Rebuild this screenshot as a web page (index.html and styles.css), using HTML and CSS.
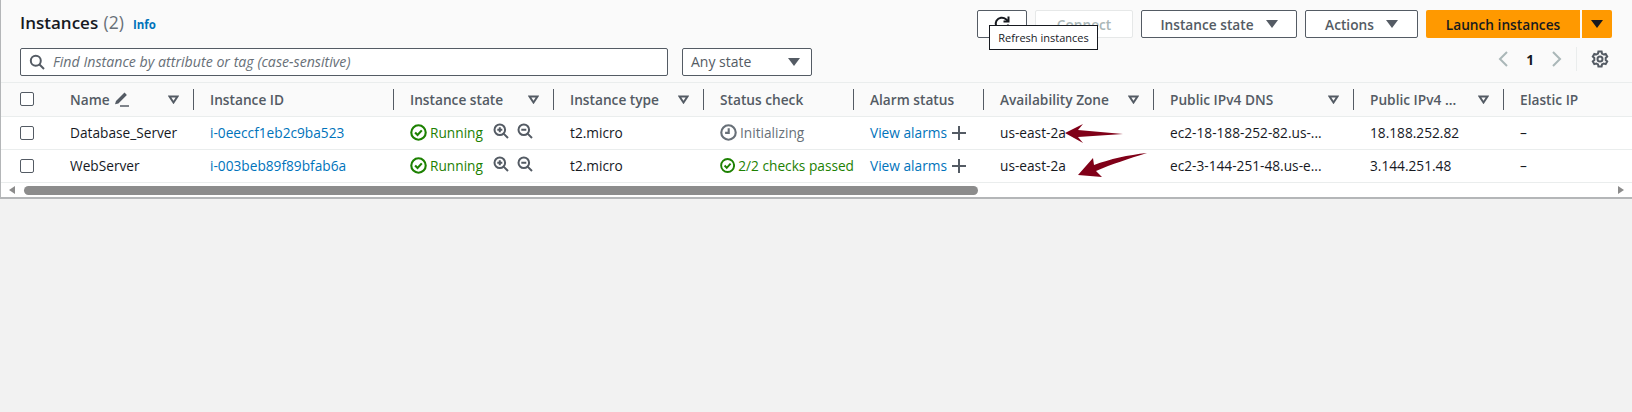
FILE: index.html
```html
<!DOCTYPE html>
<html lang="en">
<head>
    <meta charset="UTF-8">
    <title>Instances</title>
    <link rel="stylesheet" href="styles.css">
</head>
<body>
    <section class="panel">
        <div class="top">
            <div class="title-row">
                <h1>Instances <span class="count">(2)</span></h1>
                <a class="info">Info</a>
                <div class="actions">
                    <div class="refresh-wrap">
                        <button class="btn btn-refresh">
                            <svg width="20" height="20" viewBox="0 0 20 20" fill="none" stroke="#16191f" stroke-width="2"><path d="M16 10.5a6.2 6.2 0 1 1-2-5.2l2 1.7"/><path d="M16.5 2.5v5h-5"/></svg>
                        </button>
                        <div class="tooltip">Refresh instances</div>
                    </div>
                    <button class="btn btn-connect">Connect</button>
                    <button class="btn btn-state">Instance state <i class="caret"></i></button>
                    <button class="btn btn-actions">Actions <i class="caret"></i></button>
                    <div class="launch">
                        <button class="btn-launch">Launch instances</button>
                        <button class="btn-launch-caret"><i class="caret caret-dark"></i></button>
                    </div>
                </div>
            </div>
            <div class="filter-row">
                <div class="search">
                    <svg width="16" height="16" viewBox="0 0 16 16" fill="none" stroke="#545b64" stroke-width="2"><circle cx="6.8" cy="6.8" r="5"/><path d="M10.5 10.500 15 15"/></svg>
                    <span class="search-text">Find Instance by attribute or tag (case-sensitive)</span>
                </div>
                <div class="select"><span class="select-text">Any state</span> <i class="caret"></i></div>
                <div class="pager">
                    <svg width="12" height="18" viewBox="0 0 12 18" fill="none" stroke="#aab7b8" stroke-width="2"><path d="M10 2 3 9l7 7"/></svg>
                    <span class="page-num">1</span>
                    <svg width="12" height="18" viewBox="0 0 12 18" fill="none" stroke="#aab7b8" stroke-width="2"><path d="m2 2 7 7-7 7"/></svg>
                    <span class="pager-line"></span>
                    <svg width="18" height="18" viewBox="0 0 18 18" fill="none" stroke="#545b64" stroke-width="2"><circle cx="9" cy="9" r="2.500"/><path d="M7.400 1.500h3.200l.4 2 1.700 1 2-.6 1.500 2.600-1.500 1.400v2.200l1.500 1.400-1.500 2.600-2-.6-1.700 1-.4 2H7.400l-.4-2-1.700-1-2 .6-1.500-2.600 1.500-1.400V7.900L1.800 6.500l1.500-2.600 2 .6 1.700-1z"/></svg>
                </div>
            </div>
        </div>

        <table class="grid">
            <colgroup>
                <col class="c-check"><col class="c-name"><col class="c-id"><col class="c-state"><col class="c-type"><col class="c-status"><col class="c-alarm"><col class="c-zone"><col class="c-dns"><col class="c-ip"><col class="c-elastic">
            </colgroup>
            <thead>
                <tr>
                    <th class="cell-check"><span class="checkbox"></span></th>
                    <th class="th-name"><div class="th-in">Name
                        <svg class="pencil" width="16" height="16" viewBox="0 0 16 16"><path d="M1 13.200 2 10 10.500 1.600l2.400 2.400L4.400 12.400z" fill="#545b64"/><path d="M6 15h9" stroke="#545b64" stroke-width="1.500"/></svg>
                        <svg class="sort" width="11" height="9" viewBox="0 0 11 9" fill="none" stroke="#545b64" stroke-width="2"><path d="M1.500 1.500h8l-4 6z"/></svg></div></th>
                    <th><div class="th-in">Instance ID</div></th>
                    <th><div class="th-in">Instance state <svg class="sort" width="11" height="9" viewBox="0 0 11 9" fill="none" stroke="#545b64" stroke-width="2"><path d="M1.500 1.500h8l-4 6z"/></svg></div></th>
                    <th><div class="th-in">Instance type <svg class="sort" width="11" height="9" viewBox="0 0 11 9" fill="none" stroke="#545b64" stroke-width="2"><path d="M1.500 1.500h8l-4 6z"/></svg></div></th>
                    <th><div class="th-in">Status check</div></th>
                    <th><div class="th-in">Alarm status</div></th>
                    <th><div class="th-in">Availability Zone <svg class="sort" width="11" height="9" viewBox="0 0 11 9" fill="none" stroke="#545b64" stroke-width="2"><path d="M1.500 1.500h8l-4 6z"/></svg></div></th>
                    <th><div class="th-in">Public IPv4 DNS <svg class="sort" width="11" height="9" viewBox="0 0 11 9" fill="none" stroke="#545b64" stroke-width="2"><path d="M1.500 1.500h8l-4 6z"/></svg></div></th>
                    <th><div class="th-in">Public IPv4 ... <svg class="sort" width="11" height="9" viewBox="0 0 11 9" fill="none" stroke="#545b64" stroke-width="2"><path d="M1.500 1.500h8l-4 6z"/></svg></div></th>
                    <th class="th-last"><div class="th-in">Elastic IP</div></th>
                </tr>
            </thead>
            <tbody>
                <tr>
                    <td class="cell-check"><span class="checkbox"></span></td>
                    <td class="td-name">Database_Server</td>
                    <td><a class="link">i-0eeccf1eb2c9ba523</a></td>
                    <td>
                        <div class="state">
                            <svg class="ok" width="17" height="17" viewBox="0 0 16 16" fill="none" stroke="#1d8102" stroke-width="2"><circle cx="8" cy="8" r="6.800"/><path d="m4.800 8 2.300 2.400 4-4.400"/></svg>
                            <span class="green">Running</span>
                            <svg class="zoom-in" width="16" height="16" viewBox="0 0 16 16" fill="none" stroke="#545b64" stroke-width="2"><circle cx="6.800" cy="6.800" r="5.300"/><path d="M10.600 10.600 15 15M4.300 6.800h5M6.800 4.300v5"/></svg>
                            <svg class="zoom-out" width="16" height="16" viewBox="0 0 16 16" fill="none" stroke="#545b64" stroke-width="2"><circle cx="6.800" cy="6.800" r="5.300"/><path d="M10.600 10.600 15 15M4.300 6.800h5"/></svg>
                        </div>
                    </td>
                    <td>t2.micro</td>
                    <td>
                        <div class="state">
                            <svg class="ok" width="17" height="17" viewBox="0 0 16 16" fill="none" stroke="#687078" stroke-width="2"><circle cx="8" cy="8" r="6.800"/><path d="M8.200 4v4.400H4.800"/></svg>
                            <span class="gray">Initializing</span>
                        </div>
                    </td>
                    <td class="td-alarm"><a class="link">View alarms</a>
                        <svg width="14" height="14" viewBox="0 0 14 14" stroke="#545b64" stroke-width="2"><path d="M0 7h14M7 0v14"/></svg></td>
                    <td>us-east-2a</td>
                    <td>ec2-18-188-252-82.us-...</td>
                    <td>18.188.252.82</td>
                    <td class="td-last">–</td>
                </tr>
                <tr>
                    <td class="cell-check"><span class="checkbox"></span></td>
                    <td class="td-name">WebServer</td>
                    <td><a class="link">i-003beb89f89bfab6a</a></td>
                    <td>
                        <div class="state">
                            <svg class="ok" width="17" height="17" viewBox="0 0 16 16" fill="none" stroke="#1d8102" stroke-width="2"><circle cx="8" cy="8" r="6.800"/><path d="m4.800 8 2.300 2.400 4-4.400"/></svg>
                            <span class="green">Running</span>
                            <svg class="zoom-in" width="16" height="16" viewBox="0 0 16 16" fill="none" stroke="#545b64" stroke-width="2"><circle cx="6.800" cy="6.800" r="5.300"/><path d="M10.600 10.600 15 15M4.300 6.800h5M6.800 4.300v5"/></svg>
                            <svg class="zoom-out" width="16" height="16" viewBox="0 0 16 16" fill="none" stroke="#545b64" stroke-width="2"><circle cx="6.800" cy="6.800" r="5.300"/><path d="M10.600 10.600 15 15M4.300 6.800h5"/></svg>
                        </div>
                    </td>
                    <td>t2.micro</td>
                    <td>
                        <div class="state">
                            <svg class="ok" width="17" height="17" viewBox="0 0 16 16" fill="none" stroke="#1d8102" stroke-width="2"><circle cx="8" cy="8" r="6.800"/><path d="m4.800 8 2.300 2.400 4-4.400"/></svg>
                            <span class="green">2/2 checks passed</span>
                        </div>
                    </td>
                    <td class="td-alarm"><a class="link">View alarms</a>
                        <svg width="14" height="14" viewBox="0 0 14 14" stroke="#545b64" stroke-width="2"><path d="M0 7h14M7 0v14"/></svg></td>
                    <td>us-east-2a</td>
                    <td>ec2-3-144-251-48.us-e...</td>
                    <td>3.144.251.48</td>
                    <td class="td-last">–</td>
                </tr>
            </tbody>
        </table>

        <div class="scrollbar">
            <i class="arrow-left"></i>
            <div class="track"><div class="thumb"></div></div>
            <i class="arrow-right"></i>
        </div>

        <!-- hand drawn arrows on top of the table -->
        <svg class="mark mark-one" width="59" height="20" viewBox="0 0 59 20"><path d="M0 9 18 0l-5 6 45 4-45 3 5 6z" fill="#800018"/></svg>
        <svg class="mark mark-two" width="70" height="25" viewBox="0 0 70 25"><path d="M0 22 15 5l1 7C32 6 50 2 69 0 50 6 34 11 18 18l6 6z" fill="#800018"/></svg>
    </section>
</body>
</html>
```

FILE: styles.css
```css
* {
    box-sizing: border-box;
}

body {
    margin: 0;
    height: 412px;
    overflow: hidden;
    background-color: #f2f2f2;
    font-family: "Open Sans", "Noto Sans", sans-serif;
    font-size: 13.700px;
    color: #16191f;
}

.panel {
    position: relative;
    height: 199px;
    background-color: #fff;
    border-left: 1px solid #b4b6b8;
    border-bottom: 2px solid #b4b6b8;
}

.top {
    height: 83px;
    padding: 10px 20px 0 19px;
    background-color: #fafafa;
    border-bottom: 1px solid #eaeded;
}

.title-row {
    display: flex;
    align-items: flex-start;
    height: 38px;
}

h1 {
    margin: 0;
    font-size: 17px;
    font-weight: 600;
    line-height: 24px;
}

.count {
    margin-left: 1px;
    font-size: 17.500px;
    color: #687078;
    font-weight: 400;
}

.info {
    margin: 7px 0 0 9px;
    font-size: 11.500px;
    font-weight: 700;
    color: #0073bb;
}

.actions {
    display: flex;
    gap: 8px;
    margin-left: auto;
}

.btn {
    height: 28px;
    padding: 0;
    display: flex;
    align-items: center;
    justify-content: center;
    gap: 12px;
    border: 1px solid #545b64;
    border-radius: 2px;
    background-color: #fff;
    color: #545b64;
    font-family: inherit;
    font-size: 13.700px;
    font-weight: 600;
}

.refresh-wrap {
    position: relative;
}

.btn-refresh {
    width: 50px;
}

.tooltip {
    position: absolute;
    top: 15px;
    left: 12px;
    width: 109px;
    height: 25px;
    line-height: 23px;
    text-align: center;
    font-size: 11px;
    white-space: nowrap;
    background-color: #fff;
    border: 1px solid #16191f;
}

.btn-connect {
    width: 98px;
    border-color: #e6e8e8;
    color: #aab7b8;
}

.btn-state {
    width: 156px;
}

.btn-actions {
    width: 113px;
}

.caret {
    width: 0;
    height: 0;
    border-left: 6px solid transparent;
    border-right: 6px solid transparent;
    border-top: 8px solid #545b64;
}

.caret-dark {
    border-top-color: #16191f;
}

.launch {
    display: flex;
    gap: 2px;
}

.btn-launch,
.btn-launch-caret {
    height: 28px;
    padding: 0;
    display: flex;
    align-items: center;
    justify-content: center;
    border: 0;
    background-color: #ff9900;
    color: #16191f;
    font-family: inherit;
    font-size: 13.700px;
    font-weight: 600;
}

.btn-launch {
    width: 154px;
    border-radius: 2px 0 0 2px;
}

.btn-launch-caret {
    width: 30px;
    border-radius: 0 2px 2px 0;
}

.filter-row {
    display: flex;
    align-items: flex-start;
}

.search {
    width: 648px;
    height: 28px;
    display: flex;
    align-items: center;
    gap: 8px;
    padding-left: 8px;
    background-color: #fff;
    border: 1px solid #545b64;
    border-radius: 2px;
    font-size: 14.200px;
    font-style: italic;
    color: #687078;
}

.search-text,
.select-text {
    margin-top: -2px;
}

.select {
    width: 130px;
    height: 28px;
    margin-left: 14px;
    display: flex;
    align-items: center;
    justify-content: space-between;
    padding: 0 11px 0 8px;
    background-color: #fff;
    border: 1px solid #545b64;
    border-radius: 2px;
    font-size: 14px;
    color: #545b64;
}

.pager {
    display: flex;
    align-items: center;
    height: 22px;
    margin-left: auto;
    padding-right: 3px;
    gap: 17px;
}

.page-num {
    font-weight: 700;
    color: #16191f;
}

.pager-line {
    width: 1px;
    height: 24px;
    margin: 0 -3px 0 -4px;
    background-color: #eaeded;
}

.grid {
    width: 1631px;
    border-collapse: collapse;
    table-layout: fixed;
}

.c-check { width: 53px; }
.c-name { width: 140px; }
.c-id { width: 200px; }
.c-state { width: 160px; }
.c-type { width: 150px; }
.c-status { width: 150px; }
.c-alarm { width: 130px; }
.c-zone { width: 170px; }
.c-dns { width: 200px; }
.c-ip { width: 150px; }
.c-elastic { width: 128px; }

th {
    height: 33px;
    padding: 0;
    text-align: left;
    font-weight: 600;
    color: #545b64;
    background-color: #fafafa;
    border-bottom: 1px solid #eaeded;
}

.th-in {
    height: 21px;
    display: flex;
    align-items: center;
    justify-content: space-between;
    padding: 0 14px 0 16px;
    border-right: 1px solid #545b64;
    white-space: nowrap;
}

.th-last .th-in {
    border-right: 0;
}

.pencil {
    margin: 0 auto 0 4px;
}

td {
    height: 33px;
    padding: 0 0 0 16px;
    white-space: nowrap;
    overflow: hidden;
    border-bottom: 1px solid #eaeded;
}

.cell-check {
    padding: 0 0 0 19px;
}

.checkbox {
    display: block;
    width: 14px;
    height: 14px;
    background-color: #fff;
    border: 1px solid #545b64;
    border-radius: 2px;
}

.link {
    color: #0073bb;
}

.state {
    display: flex;
    align-items: center;
    gap: 3px;
}

.green {
    color: #1d8102;
}

.gray {
    color: #687078;
}

.zoom-in {
    margin: -3px 0 0 7px;
}

.zoom-out {
    margin: -3px 0 0 5px;
}

.td-alarm svg {
    margin-left: 2px;
    vertical-align: -2px;
}

.scrollbar {
    height: 15px;
    display: flex;
    align-items: center;
    padding: 0 8px;
    gap: 9px;
}

.track {
    flex: 1;
}

.thumb {
    width: 954px;
    height: 9px;
    border-radius: 5px;
    background-color: #8c8c8c;
}

.arrow-left {
    border-top: 4px solid transparent;
    border-bottom: 4px solid transparent;
    border-right: 6px solid #8c8c8c;
}

.arrow-right {
    border-top: 4px solid transparent;
    border-bottom: 4px solid transparent;
    border-left: 6px solid #8c8c8c;
}

.mark {
    position: absolute;
}

.mark-one {
    left: 1064px;
    top: 124px;
}

.mark-two {
    left: 1077px;
    top: 153px;
}
```
